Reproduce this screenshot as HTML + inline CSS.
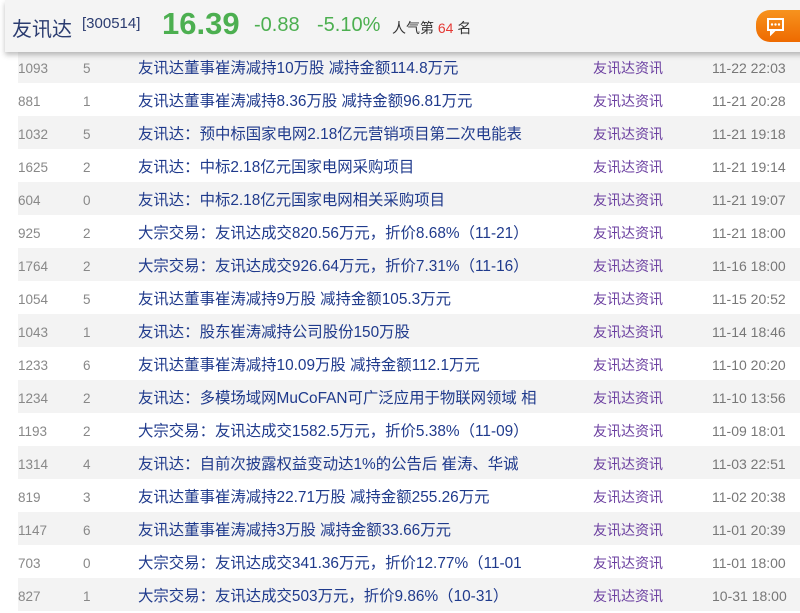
<!DOCTYPE html>
<html><head><meta charset="utf-8"><style>
*{margin:0;padding:0;box-sizing:border-box}
body{width:800px;height:604px;overflow:hidden;background:#fff;font-family:"Liberation Sans","Noto Sans CJK SC",sans-serif;position:relative}
.hdr{position:absolute;left:5px;top:0;width:800px;height:52px;background:#f4f4f4;box-shadow:0 3px 5px rgba(0,0,0,.25);z-index:2}
.hdr span{position:absolute;white-space:nowrap}
.btn{position:absolute;left:756px;top:10px;width:60px;height:32px;border-radius:14px;background:linear-gradient(#f7931e,#ee6a00)}
.row{position:absolute;left:18px;width:782px;height:33px;font-size:14px;line-height:33px}
.row.g{background:#f3f3f3}
.row span{position:absolute;white-space:nowrap;top:2px}
.a{left:0;color:#888;font-size:13.5px}
.b{left:65px;color:#888;font-size:13.5px}
.t{left:120px;color:#1f3a8c;font-size:15.4px}
.s{left:575px;color:#6b3fa0}
.d{left:694px;color:#777;font-size:14px}
</style></head><body>
<div class="hdr">
<span style="left:7px;top:13px;font-size:20px;color:#2b3c70">友讯达</span>
<span style="left:77px;top:15px;font-size:15px;color:#2b3c70">[300514]</span>
<span style="left:157px;top:6px;font-size:31px;font-weight:bold;color:#4caf50">16.39</span>
<span style="left:249px;top:14px;font-size:20px;color:#4caf50">-0.88</span>
<span style="left:312px;top:14px;font-size:20px;color:#4caf50">-5.10%</span>
<span style="left:387px;top:18px;font-size:14px;color:#333">人气第 <b style="color:#e53935;font-weight:normal">64</b> 名</span>
</div>
<div class="btn" style="z-index:3"><svg width="30" height="32" viewBox="0 0 30 32"><rect x="12" y="9" width="15" height="11" fill="none" stroke="#fff" stroke-width="2"/><path d="M15 20 l0 4 l4 -4" fill="none" stroke="#fff" stroke-width="2"/><circle cx="16" cy="14.5" r="1.2" fill="#fff"/><circle cx="19.5" cy="14.5" r="1.2" fill="#fff"/><circle cx="23" cy="14.5" r="1.2" fill="#fff"/></svg></div>

<div class="row g" style="top:50px"><span class="a">1093</span><span class="b">5</span><span class="t">友讯达董事崔涛减持10万股 减持金额114.8万元</span><span class="s">友讯达资讯</span><span class="d">11-22 22:03</span></div>
<div class="row" style="top:83px"><span class="a">881</span><span class="b">1</span><span class="t">友讯达董事崔涛减持8.36万股 减持金额96.81万元</span><span class="s">友讯达资讯</span><span class="d">11-21 20:28</span></div>
<div class="row g" style="top:116px"><span class="a">1032</span><span class="b">5</span><span class="t">友讯达：预中标国家电网2.18亿元营销项目第二次电能表</span><span class="s">友讯达资讯</span><span class="d">11-21 19:18</span></div>
<div class="row" style="top:149px"><span class="a">1625</span><span class="b">2</span><span class="t">友讯达：中标2.18亿元国家电网采购项目</span><span class="s">友讯达资讯</span><span class="d">11-21 19:14</span></div>
<div class="row g" style="top:182px"><span class="a">604</span><span class="b">0</span><span class="t">友讯达：中标2.18亿元国家电网相关采购项目</span><span class="s">友讯达资讯</span><span class="d">11-21 19:07</span></div>
<div class="row" style="top:215px"><span class="a">925</span><span class="b">2</span><span class="t">大宗交易：友讯达成交820.56万元，折价8.68%（11-21）</span><span class="s">友讯达资讯</span><span class="d">11-21 18:00</span></div>
<div class="row g" style="top:248px"><span class="a">1764</span><span class="b">2</span><span class="t">大宗交易：友讯达成交926.64万元，折价7.31%（11-16）</span><span class="s">友讯达资讯</span><span class="d">11-16 18:00</span></div>
<div class="row" style="top:281px"><span class="a">1054</span><span class="b">5</span><span class="t">友讯达董事崔涛减持9万股 减持金额105.3万元</span><span class="s">友讯达资讯</span><span class="d">11-15 20:52</span></div>
<div class="row g" style="top:314px"><span class="a">1043</span><span class="b">1</span><span class="t">友讯达：股东崔涛减持公司股份150万股</span><span class="s">友讯达资讯</span><span class="d">11-14 18:46</span></div>
<div class="row" style="top:347px"><span class="a">1233</span><span class="b">6</span><span class="t">友讯达董事崔涛减持10.09万股 减持金额112.1万元</span><span class="s">友讯达资讯</span><span class="d">11-10 20:20</span></div>
<div class="row g" style="top:380px"><span class="a">1234</span><span class="b">2</span><span class="t">友讯达：多模场域网MuCoFAN可广泛应用于物联网领域 相</span><span class="s">友讯达资讯</span><span class="d">11-10 13:56</span></div>
<div class="row" style="top:413px"><span class="a">1193</span><span class="b">2</span><span class="t">大宗交易：友讯达成交1582.5万元，折价5.38%（11-09）</span><span class="s">友讯达资讯</span><span class="d">11-09 18:01</span></div>
<div class="row g" style="top:446px"><span class="a">1314</span><span class="b">4</span><span class="t">友讯达：自前次披露权益变动达1%的公告后 崔涛、华诚</span><span class="s">友讯达资讯</span><span class="d">11-03 22:51</span></div>
<div class="row" style="top:479px"><span class="a">819</span><span class="b">3</span><span class="t">友讯达董事崔涛减持22.71万股 减持金额255.26万元</span><span class="s">友讯达资讯</span><span class="d">11-02 20:38</span></div>
<div class="row g" style="top:512px"><span class="a">1147</span><span class="b">6</span><span class="t">友讯达董事崔涛减持3万股 减持金额33.66万元</span><span class="s">友讯达资讯</span><span class="d">11-01 20:39</span></div>
<div class="row" style="top:545px"><span class="a">703</span><span class="b">0</span><span class="t">大宗交易：友讯达成交341.36万元，折价12.77%（11-01</span><span class="s">友讯达资讯</span><span class="d">11-01 18:00</span></div>
<div class="row g" style="top:578px"><span class="a">827</span><span class="b">1</span><span class="t">大宗交易：友讯达成交503万元，折价9.86%（10-31）</span><span class="s">友讯达资讯</span><span class="d">10-31 18:00</span></div>
</body></html>
